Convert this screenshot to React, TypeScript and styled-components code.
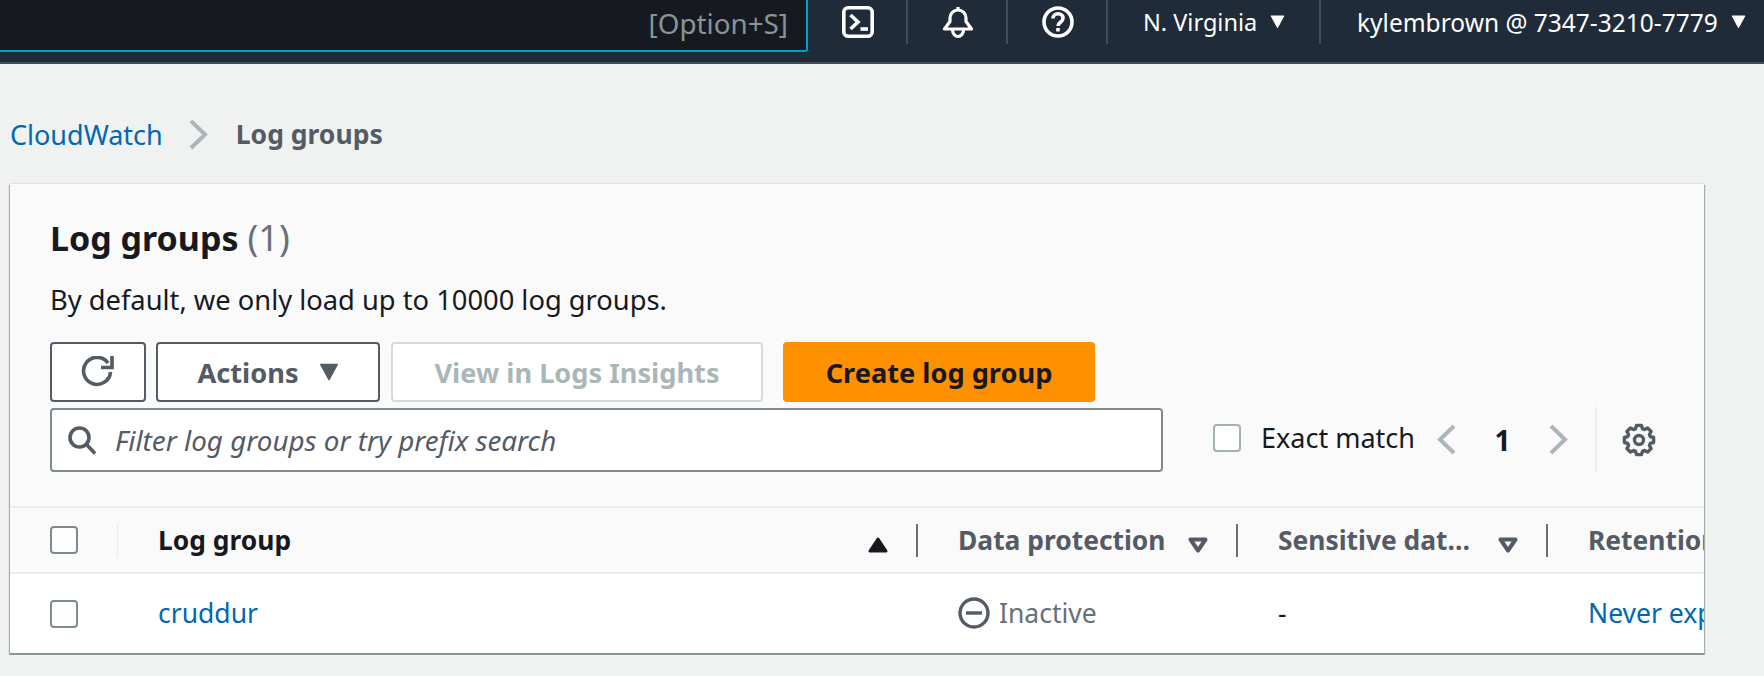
import React from 'react';
import styled, { createGlobalStyle } from 'styled-components';

const GlobalStyle = createGlobalStyle`
  * {
    box-sizing: border-box;
  }
  body {
    margin: 0;
    background: #f0f2f2;
    font-family: 'Noto Sans', 'Open Sans', sans-serif;
    color: #16191f;
  }
`;

const TopBar = styled.header`
  display: flex;
  align-items: flex-start;
  height: 64px;
  background: #1f2b38;
  border-bottom: 2px solid #414d5c;
  color: #fff;
`;

const SearchEnd = styled.div`
  width: 808px;
  height: 52px;
  display: flex;
  align-items: center;
  justify-content: flex-end;
  padding: 0 18px 4px 0;
  background: #16191f;
  border-right: 2px solid #00a1c9;
  border-bottom: 2px solid #00a1c9;
  border-bottom-right-radius: 3px;
  color: #879596;
  font-size: 27.8px;
`;

const NavIcon = styled.div`
  width: 100px;
  height: 44px;
  display: flex;
  align-items: center;
  justify-content: center;
  padding-left: 2px;
  border-right: 2px solid #414d5c;
`;

const NavMenu = styled.div<{ $width?: number; $pad: number; $size: number }>`
  ${(p) => (p.$width ? `width: ${p.$width}px;` : '')}
  height: 44px;
  display: flex;
  align-items: center;
  gap: 13px;
  padding-left: ${(p) => p.$pad}px;
  font-size: ${(p) => p.$size}px;
  white-space: nowrap;
  border-right: ${(p) => (p.$width ? '2px solid #414d5c' : 'none')};
`;

const Crumbs = styled.nav`
  height: 120px;
  padding: 20px 0 0 10px;
  display: flex;
  align-items: center;
  font-size: 27px;
`;

const CrumbLink = styled.a`
  color: #0067b4;
`;

const CrumbCurrent = styled.span`
  color: #545b64;
  font-size: 26.5px;
  font-weight: 700;
`;

const CrumbSep = styled.span`
  display: flex;
  margin: 0 28px 0 26px;
`;

const Card = styled.section`
  width: 1694px;
  height: 471px;
  margin-left: 10px;
  background: #fafafa;
  overflow: hidden;
  border-bottom: 2px solid #8b9797;
  box-shadow: 1px 1px 1px rgba(0, 28, 36, 0.3), -1px 1px 1px rgba(0, 28, 36, 0.3),
    0 -1px 1px rgba(0, 28, 36, 0.08);
`;

const CardHead = styled.div`
  height: 322px;
  padding: 34px 0 0 40px;
`;

const Title = styled.h1`
  margin: 0;
  font-size: 34px;
  line-height: 40px;
  font-weight: 700;
`;

const Count = styled.span`
  margin-left: 9px;
  font-size: 36px;
  color: #687078;
  font-weight: 400;
`;

const Description = styled.p`
  margin: 24px 0 0;
  font-size: 27.3px;
  line-height: 36px;
`;

const Toolbar = styled.div`
  display: flex;
  margin-top: 24px;
  height: 60px;
`;

const Button = styled.button<{ $width: number; $gapLeft?: number; $variant?: 'primary' | 'disabled' }>`
  width: ${(p) => p.$width}px;
  margin-left: ${(p) => p.$gapLeft ?? 0}px;
  display: flex;
  align-items: center;
  justify-content: center;
  gap: 20px;
  padding: 0;
  font-family: inherit;
  font-size: 27.2px;
  font-weight: 700;
  border-radius: 4px;
  border: 2px solid
    ${(p) => (p.$variant === 'primary' ? '#ff9000' : p.$variant === 'disabled' ? '#d5dbdb' : '#545b64')};
  background: ${(p) => (p.$variant === 'primary' ? '#ff9000' : '#fff')};
  color: ${(p) => (p.$variant === 'primary' ? '#16191f' : p.$variant === 'disabled' ? '#aab7b8' : '#545b64')};
`;

const FilterRow = styled.div`
  display: flex;
  align-items: center;
  margin-top: 5px;
  height: 65px;
`;

const Filter = styled.div`
  width: 1113px;
  height: 64px;
  display: flex;
  align-items: center;
  gap: 18px;
  padding-left: 15px;
  background: #fff;
  border: 2px solid #7f8c8d;
  border-radius: 4px;
`;

const FilterText = styled.span`
  color: #545b64;
  font-size: 27.8px;
  font-style: italic;
`;

const Check = styled.span<{ $light?: boolean }>`
  display: block;
  flex: none;
  width: 28px;
  height: 28px;
  background: #fff;
  border: 2px solid ${(p) => (p.$light ? '#a2b2b3' : '#7f8c8d')};
  border-radius: 4px;
`;

const ExactMatch = styled.label`
  display: flex;
  align-items: center;
  gap: 20px;
  margin: 0 0 4px 50px;
  font-size: 27px;
`;

const Pager = styled.div`
  display: flex;
  align-items: center;
  margin-left: 22px;
`;

const PageNumber = styled.span`
  width: 93px;
  text-align: center;
  font-size: 28px;
  font-weight: 700;
`;

const ToolDivider = styled.span`
  width: 2px;
  height: 65px;
  margin: 0 25px 0 27px;
  background: #eaeded;
`;

const TableRow = styled.div<{ $head?: boolean }>`
  display: grid;
  grid-template-columns: 108px 800px 320px 310px 1fr;
  align-items: center;
  white-space: nowrap;
  height: ${(p) => (p.$head ? 68 : 79)}px;
  background: ${(p) => (p.$head ? '#fafafa' : '#fff')};
  border-top: ${(p) => (p.$head ? '2px solid #eaeded' : 'none')};
  border-bottom: ${(p) => (p.$head ? '2px solid #eaeded' : 'none')};
`;

const HeadCell = styled.div<{ $active?: boolean; $plain?: boolean }>`
  display: flex;
  align-items: center;
  justify-content: space-between;
  height: 33px;
  padding: 0 28px 0 40px;
  font-size: 26.4px;
  font-weight: 700;
  color: ${(p) => (p.$active ? '#16191f' : '#545b64')};
  border-right: ${(p) => (p.$plain ? 'none' : '2px solid #687078')};
`;

const CheckCell = styled.div<{ $head?: boolean }>`
  display: flex;
  align-items: center;
  height: 33px;
  padding-left: 40px;
  border-right: ${(p) => (p.$head ? '1px solid #eaeded' : 'none')};
`;

const BodyCell = styled.div`
  display: flex;
  align-items: center;
  padding: 0 0 2px 40px;
  font-size: 26.5px;
`;

const RowLink = styled.a`
  color: #0067b4;
`;

const Status = styled.span`
  display: flex;
  align-items: center;
  gap: 9px;
  color: #687078;
`;

const HeadIcon = styled.svg`
  flex: none;
  margin-top: 10px;
`;

const Caret = ({ color = '#fff', size = 15 }: { color?: string; size?: number }) => (
  <svg width={size} height={size * 0.9} viewBox="0 0 14 13">
    <path d="M1 1h12L7 12z" fill={color} stroke={color} strokeLinejoin="round" />
  </svg>
);

const Chevron = ({ dir, color = '#aab7b8' }: { dir: 'left' | 'right'; color?: string }) => (
  <svg width="19" height="31" viewBox="0 0 19 31" fill="none">
    <path
      d={dir === 'right' ? 'M2 2l14 13.5L2 29' : 'M17 2L3 15.5 17 29'}
      stroke={color}
      strokeWidth="4"
    />
  </svg>
);

const FilterCaret = () => (
  <HeadIcon width="20" height="16" viewBox="0 0 20 16" fill="none">
    <path d="M2.500 2.500h15L10 13.500z" stroke="#545b64" strokeWidth="4" strokeLinejoin="round" />
  </HeadIcon>
);

const SortUp = () => (
  <HeadIcon width="20" height="16" viewBox="0 0 20 16">
    <path d="M10 2l8 12H2z" fill="#16191f" stroke="#16191f" strokeWidth="3" strokeLinejoin="round" />
  </HeadIcon>
);

// 8 squat teeth, worked out instead of typing 32 points by hand
const gearPath = () => {
  const pts: string[] = [];
  for (let i = 0; i < 8; i++) {
    const mid = (i * Math.PI) / 4 - Math.PI / 2;
    [
      [11.8, -0.3],
      [14.8, -0.17],
      [14.8, 0.17],
      [11.8, 0.3],
    ].forEach(([r, off]) => {
      const x = 17 + r * Math.cos(mid + off);
      const y = 17 + r * Math.sin(mid + off);
      pts.push(`${x.toFixed(2)} ${y.toFixed(2)}`);
    });
  }
  return `M${pts.join('L')}Z`;
};

const App = () => (
  <>
    <GlobalStyle />
    <TopBar>
      <SearchEnd>[Option+S]</SearchEnd>
      <NavIcon>
        <svg width="32" height="32" viewBox="0 0 32 32" fill="none" stroke="#fff" strokeWidth="3.6">
          <rect x="1.800" y="1.800" width="28.400" height="28.400" rx="4.500" />
          <path d="M8.500 9l7.500 7-7.500 7" />
          <path d="M18.500 23h7.500" />
        </svg>
      </NavIcon>
      <NavIcon>
        <svg width="32" height="33" viewBox="0 0 32 33" fill="none" stroke="#fff" strokeWidth="3.2">
          <path d="M16 1v3" />
          <path d="M2.500 23l5.500-7.500V12a8 8 0 0 1 16 0v3.500l5.500 7.500z" strokeLinejoin="round" />
          <path d="M10.500 23.500a5.500 7 0 0 0 11 0" />
        </svg>
      </NavIcon>
      <NavIcon>
        <svg width="32" height="32" viewBox="0 0 32 32" fill="none" stroke="#fff" strokeWidth="3.6">
          <circle cx="16" cy="16" r="14" />
          <path d="M11 12.500c0-3 2.200-4.800 5-4.800s5 1.800 5 4.500c0 4-5 4-5 7.800" />
          <path d="M16 22v3.500" />
        </svg>
      </NavIcon>
      <NavMenu $width={213} $pad={35} $size={23.5}>
        N. Virginia
        <Caret />
      </NavMenu>
      <NavMenu $pad={36} $size={24.5}>
        kylembrown @ 7347-3210-7779
        <Caret />
      </NavMenu>
    </TopBar>

    <Crumbs>
      <CrumbLink>CloudWatch</CrumbLink>
      <CrumbSep>
        <Chevron dir="right" />
      </CrumbSep>
      <CrumbCurrent>Log groups</CrumbCurrent>
    </Crumbs>

    <Card>
      <CardHead>
        <Title>
          Log groups<Count>(1)</Count>
        </Title>
        <Description>By default, we only load up to 10000 log groups.</Description>
        <Toolbar>
          <Button $width={96} aria-label="Refresh">
            <svg width="34" height="32" viewBox="0 0 34 32" fill="none" stroke="#545b64" strokeWidth="3.6">
              <path d="M27 7A13.500 13.500 0 1 0 29.500 16" />
              <path d="M31 0v11.500H20" />
            </svg>
          </Button>
          <Button $width={224} $gapLeft={10}>
            Actions
            <Caret color="#545b64" size={20} />
          </Button>
          <Button $width={372} $gapLeft={11} $variant="disabled">
            View in Logs Insights
          </Button>
          <Button $width={312} $gapLeft={20} $variant="primary">
            Create log group
          </Button>
        </Toolbar>
        <FilterRow>
          <Filter>
            <svg width="30" height="30" viewBox="0 0 30 30" fill="none" stroke="#545b64" strokeWidth="3.6">
              <circle cx="12.500" cy="12.500" r="9.500" />
              <path d="M19.500 19.500l8.500 9" />
            </svg>
            <FilterText>Filter log groups or try prefix search</FilterText>
          </Filter>
          <ExactMatch>
            <Check $light />
            Exact match
          </ExactMatch>
          <Pager>
            <Chevron dir="left" />
            <PageNumber>1</PageNumber>
            <Chevron dir="right" />
          </Pager>
          <ToolDivider />
          <svg width="34" height="34" viewBox="0 0 34 34" fill="none" stroke="#545b64" strokeWidth="3.4">
            <path d={gearPath()} strokeLinejoin="round" />
            <circle cx="17" cy="17" r="4.500" />
          </svg>
        </FilterRow>
      </CardHead>

      <TableRow $head>
        <CheckCell $head>
          <Check />
        </CheckCell>
        <HeadCell $active>
          Log group
          <SortUp />
        </HeadCell>
        <HeadCell>
          Data protection
          <FilterCaret />
        </HeadCell>
        <HeadCell>
          Sensitive dat…
          <FilterCaret />
        </HeadCell>
        <HeadCell $plain>Retention</HeadCell>
      </TableRow>
      <TableRow>
        <CheckCell>
          <Check />
        </CheckCell>
        <BodyCell>
          <RowLink>cruddur</RowLink>
        </BodyCell>
        <BodyCell>
          <Status>
            <svg width="32" height="32" viewBox="0 0 32 32" fill="none" stroke="#545b64" strokeWidth="3.4">
              <circle cx="16" cy="16" r="14" />
              <path d="M8 16h16" />
            </svg>
            Inactive
          </Status>
        </BodyCell>
        <BodyCell>-</BodyCell>
        <BodyCell>
          <RowLink>Never expire</RowLink>
        </BodyCell>
      </TableRow>
    </Card>
  </>
);

export default App;
